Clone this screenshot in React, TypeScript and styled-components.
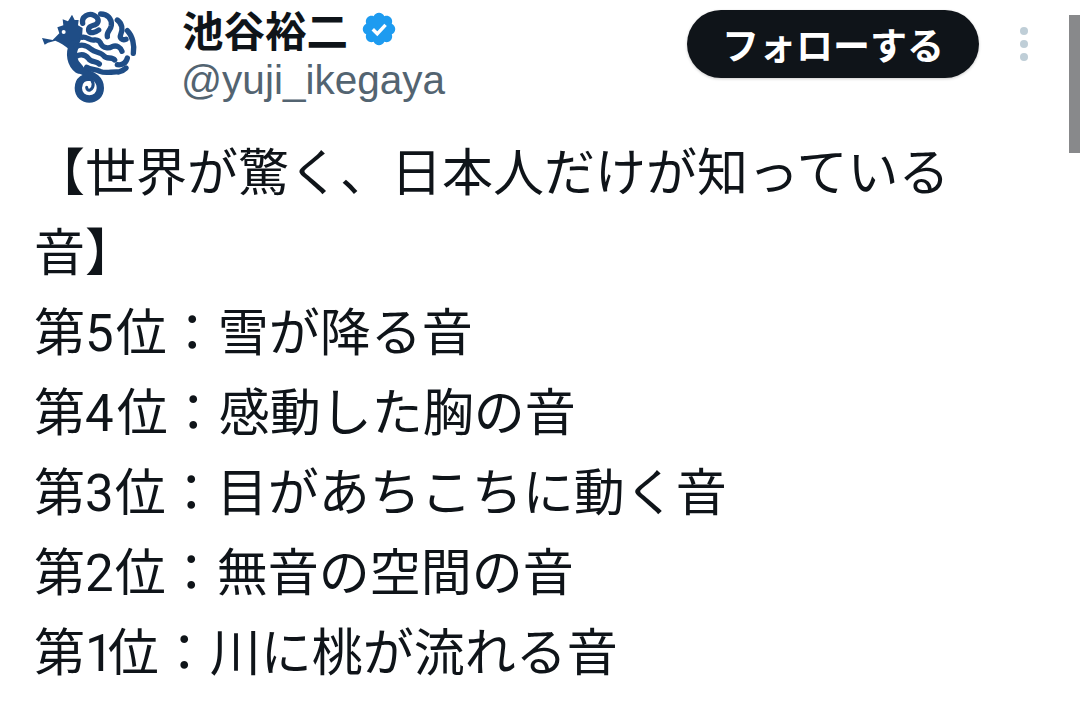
import React from "react";
import styled, { createGlobalStyle } from "styled-components";

const GlobalStyle = createGlobalStyle`
  html, body {
    margin: 0;
    padding: 0;
    background: #fff;
    overflow: hidden;
  }
`;

const Page = styled.div`
  position: relative;
  width: 1080px;
  height: 703px;
  overflow: hidden;
  background: #fff;
  font-family: Roboto, "Noto Sans CJK JP", sans-serif;
`;

const Header = styled.header`
  display: flex;
  align-items: flex-start;
  height: 134px;
`;

const Avatar = styled.svg`
  flex: none;
  width: 140px;
  height: 115px;
  margin-left: 20px;
  margin-right: 22px;
`;

const Names = styled.div`
  display: flex;
  flex-direction: column;
  width: 505px;
`;

const NameRow = styled.div`
  display: flex;
  align-items: center;
  gap: 12px;
  height: 58px;
`;

const Name = styled.span`
  font-size: 41.5px;
  font-weight: 700;
  color: #0f1419;
`;

const Handle = styled.span`
  font-family: "Liberation Sans", sans-serif;
  font-size: 40.5px;
  line-height: 44px;
  color: #536471;
  margin-left: -1px;
`;

const FollowButton = styled.button`
  flex: none;
  width: 292px;
  height: 68px;
  margin-top: 10px;
  border: 0;
  border-radius: 34px;
  padding: 0;
  background: #0f1419;
  color: #fff;
  font-family: inherit;
  font-size: 37px;
  font-weight: 700;
  box-shadow: 0 1px 3px rgba(0, 0, 0, 0.2);
`;

const MoreDots = styled.div`
  display: flex;
  flex-direction: column;
  gap: 5px;
  margin: 27px 0 0 41px;
`;

const Dot = styled.span`
  width: 8px;
  height: 8px;
  border-radius: 50%;
  background: #bfced7;
`;

const Scrollbar = styled.div`
  position: absolute;
  top: 15px;
  right: 0;
  width: 11px;
  height: 138px;
  background: #88898b;
`;

const Body = styled.div`
  padding-left: 34px;
  width: 950px;
  font-size: 51px;
  line-height: 80px;
  color: #0f1419;
`;

const Line = styled.div``;

const Digit = styled.span<{ $extra: number }>`
  letter-spacing: ${({ $extra }) => $extra}px;
`;

const rankLines = [
  { before: "第", digit: "5", extra: 2, after: "位：雪が降る音" },
  { before: "第", digit: "4", extra: 3, after: "位：感動した胸の音" },
  { before: "第", digit: "3", extra: 1, after: "位：目があちこちに動く音" },
  { before: "第", digit: "2", extra: 1, after: "位：無音の空間の音" },
  { before: "第", digit: "1", extra: -6, after: "位：川に桃が流れる音" },
];

const brainPaths = [
  "M188 70 C184 50 206 38 222 46 C238 54 238 68 226 74 C214 78 204 80 206 92 C210 102 226 98 236 90",
  "M242 42 C262 42 276 56 274 76 C272 92 258 96 262 110",
  "M292 60 C306 70 310 88 302 104 C298 114 306 122 318 118",
  "M322 92 C338 108 344 136 340 160",
  "M186 112 C200 108 208 122 222 120 C236 118 240 124 244 134 C250 144 266 146 276 140 C290 134 302 142 306 154",
  "M168 140 C186 130 204 138 214 148 C226 158 244 156 252 168 C260 178 276 170 284 180",
  "M170 168 C186 160 198 166 206 176 C214 188 228 182 238 192",
  "M322 174 C318 190 306 196 292 194",
  "M200 202 C212 210 226 206 240 214 C256 222 276 214 296 216 C304 214 312 210 318 204",
];

const App = () => {
  return (
    <Page>
      <GlobalStyle />
      <Header>
        <Avatar viewBox="0 0 420 345">
          <path
            fill="#1f4d86"
            d="M66 114 L98 120 L118 100 L112 82 L130 76 L128 58 L144 64 L156 44 L164 60 L176 60 L174 76 L188 84 L186 112 L176 134 L150 150 C134 136 122 128 106 122 L84 128 L74 134 Z"
          />
          <circle cx="131" cy="96" r="6" fill="#fff" />
          <path
            fill="none"
            stroke="#1f4d86"
            strokeWidth="30"
            strokeLinecap="round"
            d="M162 136 C150 162 156 190 176 206"
          />
          <path
            fill="none"
            stroke="#1f4d86"
            strokeWidth="22"
            strokeLinecap="round"
            d="M176 206 C198 222 241 226 241 264 C241 308 175 308 175 264 C175 238 196 230 208 232"
          />
          <path
            fill="none"
            stroke="#1f4d86"
            strokeWidth="9"
            strokeLinecap="round"
            d="M208 234 C222 242 224 262 210 270 C204 272 200 268 200 262"
          />
          {brainPaths.map((d) => (
            <path
              key={d}
              fill="none"
              stroke="#1f4d86"
              strokeWidth="16"
              strokeLinecap="round"
              strokeLinejoin="round"
              d={d}
            />
          ))}
        </Avatar>
        <Names>
          <NameRow>
            <Name>池谷裕二</Name>
            <svg width="38" height="38" viewBox="0 0 22 22">
              <path
                fill="#1d9bf0"
                d="M20.4 11c0-1.3-.8-2.5-2-3.100.5-1.300.2-2.700-.7-3.600-.9-.9-2.300-1.200-3.600-.7C13.500 2.400 12.300 1.600 11 1.600S8.500 2.400 7.900 3.600c-1.300-.5-2.700-.2-3.600.7-.9.900-1.200 2.300-.7 3.600C2.400 8.500 1.600 9.700 1.600 11s.8 2.500 2 3.100c-.5 1.300-.2 2.700.7 3.600.9.900 2.300 1.200 3.600.7.600 1.200 1.800 2 3.100 2s2.500-.8 3.100-2c1.300.5 2.700.2 3.600-.7.900-.9 1.200-2.300.7-3.600 1.200-.6 2-1.800 2-3.100z"
              />
              <path
                fill="none"
                stroke="#fff"
                strokeWidth="2"
                d="M7.400 11.200l2.600 2.600 4.800-5.200"
              />
            </svg>
          </NameRow>
          <Handle>@yuji_ikegaya</Handle>
        </Names>
        <FollowButton>フォローする</FollowButton>
        <MoreDots>
          <Dot />
          <Dot />
          <Dot />
        </MoreDots>
      </Header>
      <Scrollbar />
      <Body>
        <Line>【世界が驚く、日本人だけが知っている音】</Line>
        {rankLines.map((line) => (
          <Line key={line.digit}>
            {line.before}
            <Digit $extra={line.extra}>{line.digit}</Digit>
            {line.after}
          </Line>
        ))}
      </Body>
    </Page>
  );
};

export default App;
